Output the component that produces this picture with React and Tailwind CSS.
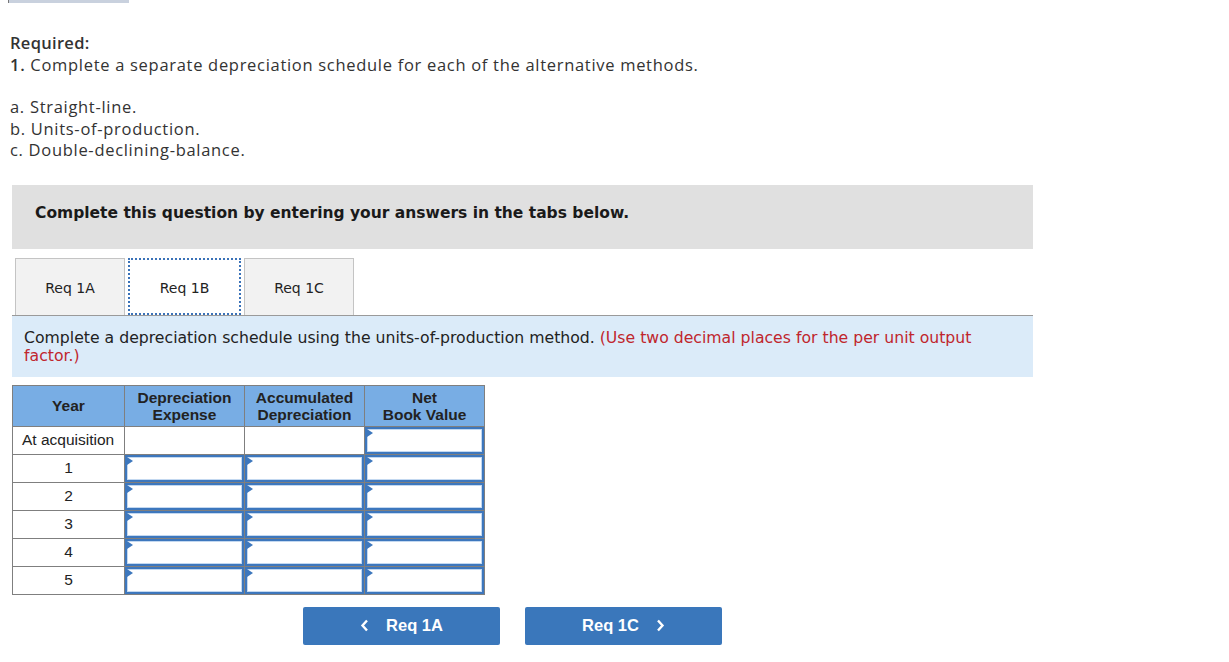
import React from 'react';

const rows = ['1', '2', '3', '4', '5'];

function InputCell() {
  return (
    <td className="border border-[#7f7f7f] p-0 h-[28px]">
      <div className="relative h-full border-2 border-[#3d77bd] shadow-[inset_0_0_0_1px_#c3d8f0] bg-white">
        <span className="absolute left-0 top-0 w-0 h-0 border-y-[4px] border-y-transparent border-l-[6px] border-l-[#3d77bd]" />
      </div>
    </td>
  );
}

export default function App() {
  return (
    <div className="w-[1229px] h-[662px] bg-white overflow-hidden">
      <div className="ml-2 w-[121px] h-[3px] bg-[#c9d1de] border-l border-[#777]" />

      <div className="px-[10px] pt-[29px] text-[16.5px] leading-[21.5px] tracking-[0.7px] text-[#333] font-['Open_Sans',sans-serif]">
        <div className="font-semibold tracking-[0.3px]">Required:</div>
        <div><span className="font-semibold">1.</span> Complete a separate depreciation schedule for each of the alternative methods.</div>
        <div className="h-[21px]" />
        <div>a. Straight-line.</div>
        <div>b. Units-of-production.</div>
        <div>c. Double-declining-balance.</div>
      </div>

      <div className="ml-3 w-[1021px] mt-[24px] font-['DejaVu_Sans',Verdana,sans-serif]">
        <div className="h-[64px] bg-[#e0e0e0] flex items-center pl-[23px] pb-[6px]">
          <span className="text-[15.5px] font-bold text-[#1a1a1a]">Complete this question by entering your answers in the tabs below.</span>
        </div>

        <div className="mt-[9px] flex gap-[3px] pl-[3px] h-[57px]">
          <div className="w-[110px] bg-[#f2f2f2] border border-b-0 border-[#c4c4c4] flex items-center justify-center pt-[4px] text-[14px] text-[#222]">Req 1A</div>
          <div className="w-[113px] bg-white border-2 border-dotted border-[#3a72b8] flex items-center justify-center pt-[4px] text-[14px] text-[#222]">Req 1B</div>
          <div className="w-[110px] bg-[#f2f2f2] border border-b-0 border-[#c4c4c4] flex items-center justify-center pt-[4px] text-[14px] text-[#222]">Req 1C</div>
        </div>

        <div className="h-[62px] bg-[#dbebf9] border-t border-[#9a9a9a] pl-3 pr-[50px] pt-[13px] text-[15.7px] leading-[18px] text-[#222]">
          Complete a depreciation schedule using the units-of-production method. <span className="text-[#c0262d]">(Use two decimal places for the per unit output factor.)</span>
        </div>
      </div>

      <table className="ml-3 mt-[8px] border-collapse font-['Liberation_Sans',Arial,sans-serif] text-[15.5px] text-[#222]">
        <thead>
          <tr className="bg-[#78ade4] h-[41px]">
            <th className="w-[112px] border border-[#7f7f7f] font-bold leading-[17px]">Year</th>
            <th className="w-[120px] border border-[#7f7f7f] font-bold leading-[17px]">Depreciation<br />Expense</th>
            <th className="w-[120px] border border-[#7f7f7f] font-bold leading-[17px]">Accumulated<br />Depreciation</th>
            <th className="w-[120px] border border-[#7f7f7f] font-bold leading-[17px]">Net<br />Book Value</th>
          </tr>
        </thead>
        <tbody>
          <tr className="h-[28px]">
            <td className="border border-[#7f7f7f] pl-[9px]">At acquisition</td>
            <td className="border border-[#7f7f7f]" />
            <td className="border border-[#7f7f7f]" />
            <InputCell />
          </tr>
          {rows.map((r) => (
            <tr key={r} className="h-[28px]">
              <td className="border border-[#7f7f7f] text-center">{r}</td>
              <InputCell />
              <InputCell />
              <InputCell />
            </tr>
          ))}
        </tbody>
      </table>

      <div className="mt-[12px] ml-[303px] flex gap-[25px] font-['Liberation_Sans',Arial,sans-serif]">
        <button className="w-[197px] h-[38px] rounded-[2px] bg-[#3a77bb] text-white font-bold text-[16.5px] flex items-center justify-center gap-[17px]">
          <svg width="9" height="13" viewBox="0 0 9 13"><path d="M7 1.5 L2.5 6.5 L7 11.5" stroke="white" strokeWidth="2.4" fill="none" /></svg>
          Req 1A
        </button>
        <button className="w-[197px] h-[38px] rounded-[2px] bg-[#3a77bb] text-white font-bold text-[16.5px] flex items-center justify-center gap-[17px]">
          Req 1C
          <svg width="9" height="13" viewBox="0 0 9 13"><path d="M2 1.5 L6.5 6.5 L2 11.5" stroke="white" strokeWidth="2.4" fill="none" /></svg>
        </button>
      </div>
    </div>
  );
}
